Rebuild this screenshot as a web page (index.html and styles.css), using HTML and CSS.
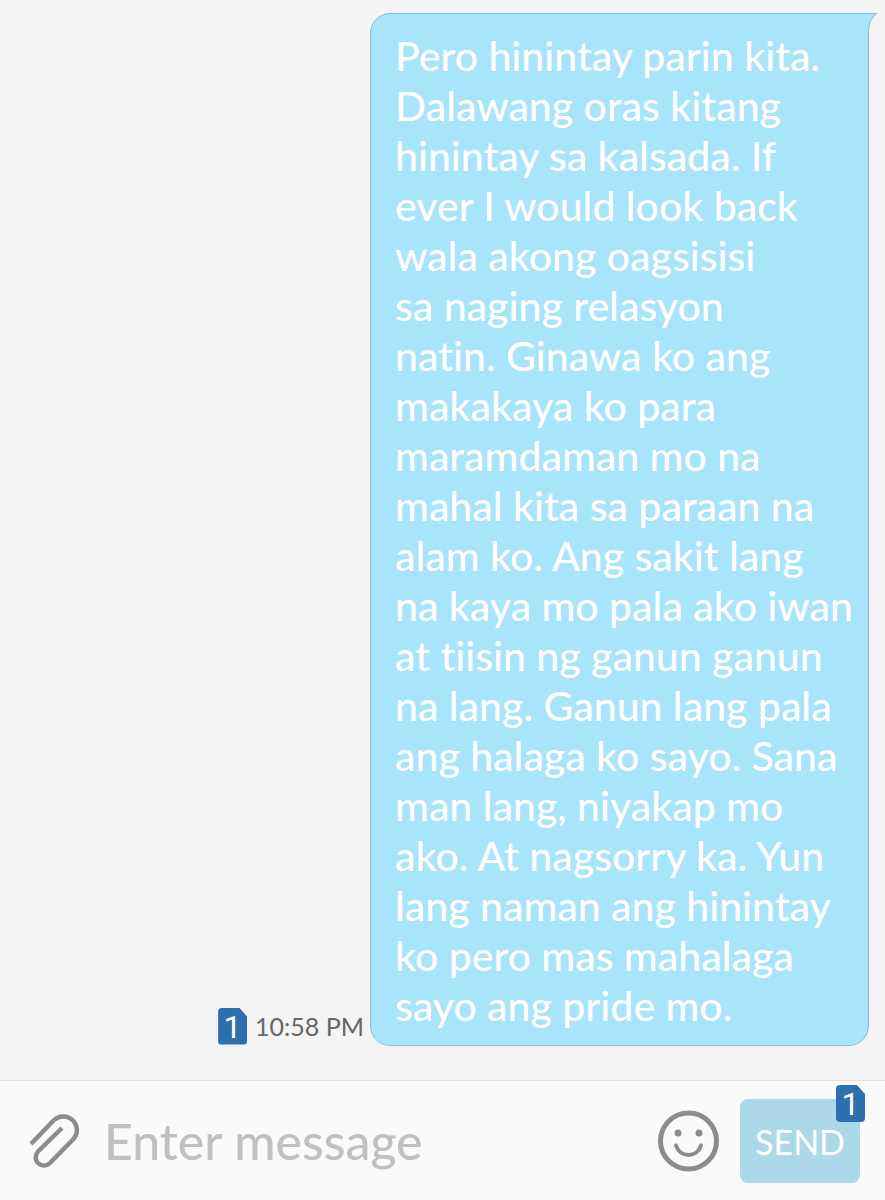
FILE: index.html
```html
<!DOCTYPE html>
<html lang="tl">
<head>
  <meta charset="UTF-8">
  <meta name="viewport" content="width=device-width, initial-scale=1">
  <title>Messages</title>
  <link rel="stylesheet" href="styles.css">
</head>
<body>
  <main class="thread">
    <div class="message-meta">
      <span class="sim">1</span>
      <time class="message-time">10:58 PM</time>
    </div>
    <div class="bubble">
      <p class="bubble-text">
        Pero hinintay parin kita.<br>
        Dalawang oras kitang<br>
        hinintay sa kalsada. If<br>
        ever I would look back<br>
        wala akong oagsisisi<br>
        sa naging relasyon<br>
        natin. Ginawa ko ang<br>
        makakaya ko para<br>
        maramdaman mo na<br>
        mahal kita sa paraan na<br>
        alam ko. Ang sakit lang<br>
        na kaya mo pala ako iwan<br>
        at tiisin ng ganun ganun<br>
        na lang. Ganun lang pala<br>
        ang halaga ko sayo. Sana<br>
        man lang, niyakap mo<br>
        ako. At nagsorry ka. Yun<br>
        lang naman ang hinintay<br>
        ko pero mas mahalaga<br>
        sayo ang pride mo.
      </p>
      <svg class="bubble-tail" width="10" height="24" viewBox="0 0 10 24" aria-hidden="true">
        <path d="M0 0H9Q1 7 .5 18V24H0Z" fill="#a8e4fa"/>
        <path d="M0 .5H8.5Q.5 7 .5 18V24" fill="none" stroke="#86bfd4" stroke-width="1"/>
      </svg>
    </div>
  </main>

  <form class="composer">
    <button class="icon-button" type="button" aria-label="Attach">
      <svg width="52" height="56" viewBox="0 0 52 56" fill="none" stroke="#8c8c8c" stroke-width="4.5">
        <path d="M3 31L25.5 7.5A13.5 13.5 0 0 1 45 26.5L22 50A8 8 0 0 1 10 38.5L34 15"/>
      </svg>
    </button>
    <input class="composer-input" type="text" placeholder="Enter message" aria-label="Enter message">
    <button class="icon-button" type="button" aria-label="Emoji">
      <svg width="62" height="62" viewBox="0 0 62 62" fill="none" stroke="#8c8c8c">
        <circle cx="30.5" cy="31" r="28" stroke-width="5"/>
        <circle cx="20" cy="23" r="3.5" fill="#8c8c8c" stroke="none"/>
        <circle cx="41" cy="23" r="3.5" fill="#8c8c8c" stroke="none"/>
        <path d="M18 35.500C22 48 39 48 43 35.500" stroke-width="4" stroke-linecap="round"/>
      </svg>
    </button>
    <button class="send" type="submit">SEND<span class="sim send-sim" aria-hidden="true">1</span></button>
  </form>
</body>
</html>
```

FILE: styles.css
```css
* {
  box-sizing: border-box;
}

body {
  margin: 0;
  min-height: 100vh;
  display: flex;
  flex-direction: column;
  background-color: #f4f4f4;
  font-family: Lato, sans-serif;
  font-variant-ligatures: none;
}

.thread {
  flex: 1;
  display: flex;
  justify-content: flex-end;
  align-items: flex-end;
  gap: 6px;
  padding: 13px 16px 34px;
}

.message-meta {
  display: flex;
  align-items: center;
  gap: 8px;
  color: #666;
}

.message-time {
  font-size: 25px;
  line-height: 40px;
  white-space: nowrap;
}

.sim {
  width: 29px;
  height: 37px;
  border-radius: 4px;
  background-color: #2f6fad;
  color: #fff;
  clip-path: polygon(0 0, 72% 0, 100% 24%, 100% 100%, 0 100%);
  font-family: Roboto, sans-serif;
  font-size: 32px;
  font-weight: 400;
  line-height: 38px;
  text-align: center;
}

.bubble {
  position: relative;
  flex: 0 1 499px;
  padding: 17px 8px 14px 24px;
  background-color: #a8e4fa;
  border: 1px solid #86bfd4;
  border-radius: 20px 0 20px 20px;
}

.bubble-text {
  margin: 0;
  color: #fff;
  font-size: 41px;
  font-weight: 500;
  line-height: 50px;
}

/* curved corner on the sender side */
.bubble-tail {
  position: absolute;
  top: -1px;
  right: -10px;
}

.composer {
  display: flex;
  align-items: center;
  padding: 18px 25px 17px 28px;
  border-top: 1px solid #e2e2e2;
  background-color: #fafafa;
}

.icon-button {
  flex: none;
  display: flex;
  padding: 0;
  border: none;
  background: none;
  cursor: pointer;
}

.composer-input {
  flex: 1;
  min-width: 0;
  margin: 0 24px;
  padding: 0;
  border: none;
  outline: none;
  background: none;
  color: #444;
  font-family: inherit;
  font-size: 50px;
  font-weight: 500;
  line-height: 60px;
}

.composer-input::placeholder {
  color: #c0c0c0;
  opacity: 1;
}

.send {
  position: relative;
  flex: none;
  width: 120px;
  height: 84px;
  margin-left: 20px;
  padding: 0;
  border: none;
  border-radius: 8px;
  background-color: #add8e9;
  color: #fff;
  font-family: inherit;
  font-size: 34px;
  cursor: pointer;
}

.send-sim {
  position: absolute;
  top: -14px;
  right: -5px;
}
```
